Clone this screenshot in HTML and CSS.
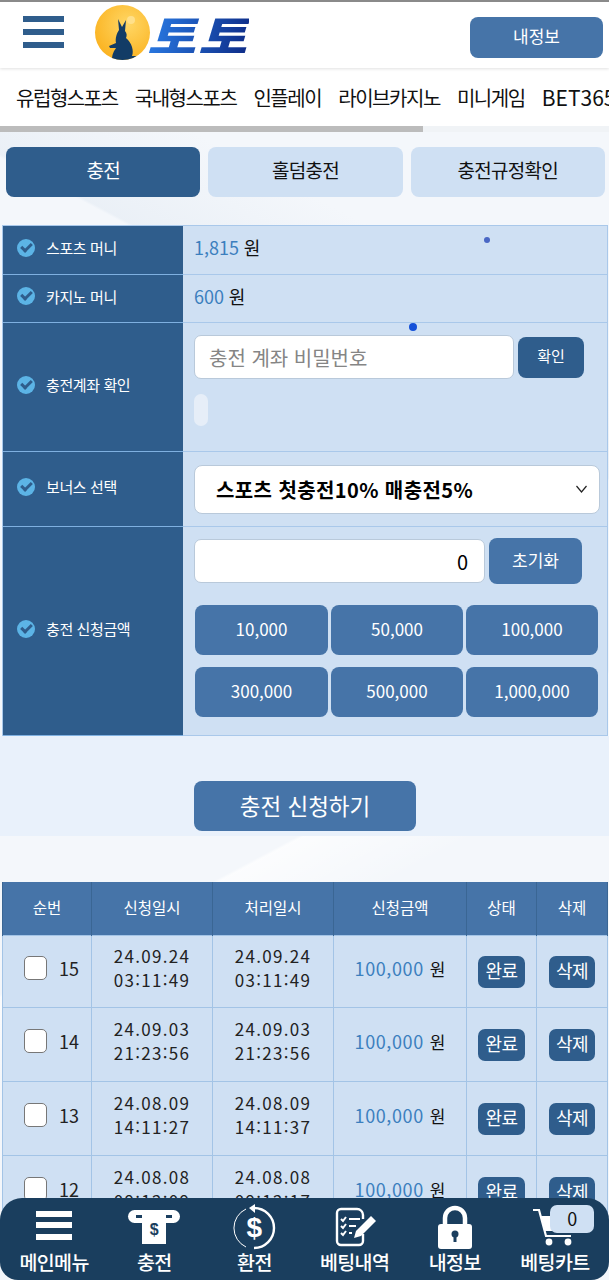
FILE: index.html
```html
<!DOCTYPE html>
<html lang="ko">
<head>
    <meta charset="UTF-8">
    <meta name="viewport" content="width=device-width, initial-scale=1.0">
    <title>충전</title>
    <link rel="stylesheet" href="styles.css">
</head>
<body>
    <div class="page">
        <header class="top-bar">
            <div class="burger"><span></span><span></span><span></span></div>
            <div class="logo">
                <div class="moon">
                    <svg viewBox="0 0 55 55" width="55" height="55">
                        <circle cx="36" cy="15" r="4" fill="#ffe08a"/>
                        <path d="M17 55 C17 49 19 46 21 43 L15 43 L14 41 L21 38 C20 33 22 28 24 25 L23 14 L27 22 L31 15 L30 26 C32 28 32 31 31 33 C37 38 39 46 37 51 L43 51 L38 55 Z" fill="#123c66"/>
                    </svg>
                </div>
                <span class="logo-text">토토</span>
            </div>
            <a class="my-btn" href="#">내정보</a>
        </header>

        <nav class="game-nav">
            <a href="#">유럽형스포츠</a>
            <a href="#">국내형스포츠</a>
            <a href="#">인플레이</a>
            <a href="#">라이브카지노</a>
            <a href="#">미니게임</a>
            <a class="bet365" href="#">BET365</a>
        </nav>
        <div class="nav-scroll"><div class="nav-thumb"></div></div>

        <div class="tabs">
            <a class="tab active" href="#">충전</a>
            <a class="tab" href="#">홀덤충전</a>
            <a class="tab" href="#">충전규정확인</a>
        </div>

        <section class="form-table">
            <span class="dot dot-small"></span>
            <span class="dot dot-big"></span>

            <div class="form-row row-sports">
                <div class="form-label"><i class="check"></i>스포츠 머니</div>
                <div class="form-value"><span><b class="num">1,815</b> <span class="won">원</span></span></div>
            </div>
            <div class="form-row row-money">
                <div class="form-label"><i class="check"></i>카지노 머니</div>
                <div class="form-value"><span><b class="num">600</b> <span class="won">원</span></span></div>
            </div>
            <div class="form-row row-account">
                <div class="form-label"><i class="check"></i>충전계좌 확인</div>
                <div class="form-value stack">
                    <div class="input-line">
                        <input class="text-input pass-input" type="text" placeholder="충전 계좌 비밀번호">
                        <button class="btn dark confirm-btn">확인</button>
                    </div>
                    <div class="pill"></div>
                </div>
            </div>
            <div class="form-row row-bonus">
                <div class="form-label"><i class="check"></i>보너스 선택</div>
                <div class="form-value">
                    <div class="select-box">
                        <span>스포츠 첫충전10% 매충전5%</span>
                        <svg viewBox="0 0 12 8" width="13" height="8"><path d="M1 1 L6 7 L11 1" fill="none" stroke="#222" stroke-width="1.2"/></svg>
                    </div>
                </div>
            </div>
            <div class="form-row row-amount">
                <div class="form-label"><i class="check"></i>충전 신청금액</div>
                <div class="form-value stack">
                    <div class="input-line">
                        <input class="text-input amount-input" type="text" value="0">
                        <button class="btn reset-btn">초기화</button>
                    </div>
                    <div class="amount-grid">
                        <button class="btn">10,000</button>
                        <button class="btn">50,000</button>
                        <button class="btn">100,000</button>
                        <button class="btn">300,000</button>
                        <button class="btn">500,000</button>
                        <button class="btn">1,000,000</button>
                    </div>
                </div>
            </div>
        </section>

        <div class="submit-zone">
            <button class="btn submit-btn">충전 신청하기</button>
        </div>

        <table class="history">
            <colgroup>
                <col class="c-no"><col class="c-date"><col class="c-date"><col class="c-amount"><col class="c-state"><col class="c-del">
            </colgroup>
            <thead>
                <tr><th>순번</th><th>신청일시</th><th>처리일시</th><th>신청금액</th><th>상태</th><th>삭제</th></tr>
            </thead>
            <tbody>
                <tr>
                    <td><div class="no-cell"><i class="box"></i>15</div></td>
                    <td>24.09.24<br>03:11:49</td>
                    <td>24.09.24<br>03:11:49</td>
                    <td><b class="num">100,000</b> <span class="won">원</span></td>
                    <td><span class="chip">완료</span></td>
                    <td><span class="chip">삭제</span></td>
                </tr>
                <tr>
                    <td><div class="no-cell"><i class="box"></i>14</div></td>
                    <td>24.09.03<br>21:23:56</td>
                    <td>24.09.03<br>21:23:56</td>
                    <td><b class="num">100,000</b> <span class="won">원</span></td>
                    <td><span class="chip">완료</span></td>
                    <td><span class="chip">삭제</span></td>
                </tr>
                <tr>
                    <td><div class="no-cell"><i class="box"></i>13</div></td>
                    <td>24.08.09<br>14:11:27</td>
                    <td>24.08.09<br>14:11:37</td>
                    <td><b class="num">100,000</b> <span class="won">원</span></td>
                    <td><span class="chip">완료</span></td>
                    <td><span class="chip">삭제</span></td>
                </tr>
                <tr>
                    <td><div class="no-cell"><i class="box"></i>12</div></td>
                    <td>24.08.08<br>09:12:09</td>
                    <td>24.08.08<br>09:12:17</td>
                    <td><b class="num">100,000</b> <span class="won">원</span></td>
                    <td><span class="chip">완료</span></td>
                    <td><span class="chip">삭제</span></td>
                </tr>
            </tbody>
        </table>

        <div class="bottom-nav">
            <a href="#">
                <svg viewBox="0 0 60 46" width="60" height="46">
                    <g fill="#fff"><rect x="12" y="7" width="36" height="6"/><rect x="12" y="18" width="36" height="6"/><rect x="12" y="30" width="36" height="6"/></g>
                </svg>
                <span>메인메뉴</span>
            </a>
            <a href="#">
                <svg viewBox="0 0 60 46" width="60" height="46">
                    <rect x="4" y="6" width="52" height="13" rx="6.5" fill="#fff"/>
                    <rect x="12" y="11" width="36" height="3" fill="#1a3e5e"/>
                    <rect x="18" y="11" width="24" height="29" fill="#fff"/>
                    <text x="30" y="31" class="icon-dollar small">$</text>
                </svg>
                <span>충전</span>
            </a>
            <a href="#">
                <svg viewBox="0 0 60 46" width="60" height="46">
                    <path d="M22 5 A21 21 0 0 0 22 43" fill="none" stroke="#fff" stroke-width="1"/>
                    <path d="M30 4 A20 20 0 0 1 30 44" fill="none" stroke="#fff" stroke-width="2.4"/>
                    <path d="M31 0 L25 4 L31 9 Z" fill="#fff"/>
                    <text x="30" y="33" class="icon-dollar">$</text>
                </svg>
                <span>환전</span>
            </a>
            <a href="#">
                <svg viewBox="0 0 60 46" width="60" height="46">
                    <path d="M38 30 V37 A4 4 0 0 1 34 41 H16 A4 4 0 0 1 12 37 V9 A4 4 0 0 1 16 5 H32 A6 6 0 0 1 38 11 V15" fill="none" stroke="#fff" stroke-width="2.4"/>
                    <g stroke="#fff" stroke-width="2" fill="none">
                        <path d="M16 15 L18 17 L21 13"/><path d="M24 15 H35"/>
                        <path d="M16 22 L18 24 L21 20"/><path d="M24 22 H31"/>
                        <path d="M16 29 L18 31 L21 27"/><path d="M24 29 H27"/>
                    </g>
                    <path d="M29 34 L31 27 L46 12 L51 17 L36 32 Z" fill="#fff"/>
                </svg>
                <span>베팅내역</span>
            </a>
            <a href="#">
                <svg viewBox="0 0 60 46" width="60" height="46">
                    <path d="M20 22 V14 A10 10 0 0 1 40 14 V22" fill="none" stroke="#fff" stroke-width="4.5"/>
                    <rect x="13" y="20" width="34" height="25" rx="3" fill="#fff"/>
                    <circle cx="30" cy="30" r="3.5" fill="#1a3e5e"/>
                    <rect x="28.5" y="31" width="3" height="7" fill="#1a3e5e"/>
                </svg>
                <span>내정보</span>
            </a>
            <a href="#" class="cart-item">
                <svg viewBox="0 0 60 46" width="60" height="46">
                    <path d="M8 6 H14 L21 32 H46" fill="none" stroke="#fff" stroke-width="2.2"/>
                    <path d="M16 12 H50 L46 27 H20 Z" fill="#fff"/>
                    <circle cx="24" cy="38" r="3.4" fill="#fff"/>
                    <circle cx="43" cy="38" r="3.4" fill="#fff"/>
                </svg>
                <span>베팅카트</span>
                <em class="cart-badge">0</em>
            </a>
        </div>
    </div>
</body>
</html>
```

FILE: styles.css
```css
html, body {
    height: 100%;
    margin: 0;
    padding: 0;
    overflow: hidden;
}
body {
    font-family: "Noto Sans CJK KR", "Noto Sans", sans-serif;
    color: #111;
}
a {
    color: inherit;
    text-decoration: none;
}
button, input {
    font-family: inherit;
}
.page {
    position: relative;
    height: 100%;
    overflow: hidden;
    background-color: #f4f7fb;
    background-image:
        linear-gradient(152deg, transparent 62%, rgba(255, 255, 255, 0.7) 62.2%, transparent 68%),
        linear-gradient(28deg, transparent 70%, rgba(225, 233, 242, 0.5) 70.2%, transparent 78%);
}

/* header */
.top-bar {
    display: flex;
    align-items: flex-start;
    height: 66px;
    background: #fff;
    border-top: 2px solid #8a8a8a;
    box-shadow: 0 1px 3px rgba(0, 0, 0, 0.12);
    position: relative;
}
.burger {
    width: 41px;
    margin: 14px 0 0 23px;
}
.burger span {
    display: block;
    height: 6px;
    margin-bottom: 7px;
    background: #2f5d8c;
}
.logo {
    display: flex;
    margin: 3px 0 0 31px;
}
.moon {
    width: 55px;
    height: 55px;
    border-radius: 50%;
    overflow: hidden;
    background: radial-gradient(circle at 60% 35%, #ffd765, #fbb423 75%);
}
.logo-text {
    margin: 7px 0 0 -3px;
    font-size: 44px;
    line-height: 44px;
    font-weight: 900;
    font-style: italic;
    letter-spacing: 2px;
    transform: scaleX(1.2);
    transform-origin: left center;
    background: linear-gradient(100deg, #2b7ee8, #0d2a85);
    -webkit-background-clip: text;
    background-clip: text;
    color: transparent;
}
.my-btn {
    margin: 15px 6px 0 auto;
    width: 133px;
    height: 41px;
    line-height: 38px;
    text-align: center;
    border-radius: 8px;
    background: #4674a8;
    color: #fff;
    font-size: 17px;
}

/* game menu */
.game-nav {
    display: flex;
    gap: 17px;
    height: 58px;
    padding-left: 16px;
    align-items: center;
    background: #fff;
    white-space: nowrap;
    overflow: hidden;
    font-size: 20px;
    letter-spacing: -1.45px;
}
.bet365 {
    font-size: 21px;
    letter-spacing: 0;
}
.nav-scroll {
    height: 6px;
    background: #f0f3f6;
}
.nav-thumb {
    width: 423px;
    height: 6px;
    background: #bcbcbc;
}

/* tabs */
.tabs {
    display: flex;
    gap: 8px;
    padding: 15px 4px 0 6px;
}
.tab {
    flex: 1;
    height: 50px;
    line-height: 46px;
    text-align: center;
    border-radius: 8px;
    background: #cfe0f3;
    font-size: 19px;
    letter-spacing: -0.7px;
}
.tab.active {
    background: #2f5d8c;
    color: #fff;
}

/* charge form */
.form-table {
    position: relative;
    margin: 28px 1px 0 2px;
    border: 1px solid #a9c8ea;
    border-width: 1px 1px 0;
}
.dot {
    position: absolute;
    border-radius: 50%;
    background: #1450d8;
}
.dot-small {
    left: 481px;
    top: 11px;
    width: 6px;
    height: 6px;
    background: #4a67c4;
}
.dot-big {
    left: 406px;
    top: 97px;
    width: 8px;
    height: 8px;
}
.form-row {
    display: grid;
    grid-template-columns: 180px 1fr;
}
.row-sports {
    height: 49px;
}
.row-money {
    height: 48px;
}
.row-account {
    height: 129px;
}
.row-bonus {
    height: 75px;
}
.row-amount {
    height: 209px;
}
.form-label {
    display: flex;
    align-items: center;
    padding: 0 0 5px 14px;
    background: #2f5d8c;
    border-bottom: 1px solid #7fb0e0;
    color: #fff;
    font-size: 15px;
    letter-spacing: -0.4px;
}
.check {
    position: relative;
    flex: none;
    width: 18px;
    height: 18px;
    margin-right: 11px;
    border-radius: 50%;
    background: #5cb4e6;
}
.check::after {
    content: "";
    position: absolute;
    left: 4px;
    top: 4px;
    width: 8px;
    height: 4px;
    border-left: 3px solid #2f5d8c;
    border-bottom: 3px solid #2f5d8c;
    transform: rotate(-45deg);
}
.form-value {
    display: flex;
    align-items: center;
    padding: 0 0 6px 11px;
    background: #cfe0f3;
    border-bottom: 1px solid #a9c8ea;
    font-size: 17px;
}
.form-value.stack {
    display: block;
    padding: 12px 0 0 11px;
}
.row-amount .form-value.stack {
    padding-top: 11px;
}
.num {
    font-weight: 400;
    color: #3c7fbe;
    font-size: 18px;
}
.input-line {
    display: flex;
    align-items: center;
    gap: 4px;
}
.text-input {
    box-sizing: border-box;
    height: 44px;
    border: 1px solid #b9c9da;
    border-radius: 7px;
    background: #fff;
    font-size: 20px;
    outline: none;
}
.pass-input {
    width: 320px;
    padding: 0 14px;
}
.text-input::placeholder {
    color: #858585;
    opacity: 1;
}
.amount-input {
    width: 291px;
    padding: 0 16px;
    text-align: right;
    color: #000;
}
.pill {
    width: 14px;
    height: 32px;
    margin-top: 15px;
    border-radius: 7px;
    background: #e6eef8;
}
.row-bonus .form-value {
    padding-bottom: 0;
}
.select-box {
    box-sizing: border-box;
    display: flex;
    align-items: center;
    justify-content: space-between;
    width: 406px;
    height: 49px;
    padding: 0 11px 0 21px;
    border: 1px solid #b9c9da;
    border-radius: 8px;
    background: #fff;
    font-size: 20px;
    font-weight: 700;
    letter-spacing: 0.4px;
    color: #000;
}
.btn {
    border: 0;
    border-radius: 8px;
    background: #4674a8;
    color: #fff;
    font-size: 17px;
    padding: 0 0 3px;
}
.btn.dark {
    background: #2f5d8c;
}
.confirm-btn {
    width: 66px;
    height: 41px;
    font-size: 15px;
}
.reset-btn {
    width: 93px;
    height: 46px;
}
.amount-grid {
    display: grid;
    grid-template-columns: 133px 132px 132px;
    grid-auto-rows: 50px;
    gap: 12px 3px;
    margin: 21px 0 0 1px;
}

/* submit */
.submit-zone {
    height: 50px;
    padding: 45px 0 5px 194px;
    background: #e9f1fb;
}
.submit-btn {
    width: 222px;
    height: 50px;
    font-size: 22.5px;
}

/* history */
.history {
    width: 606px;
    margin: 46px 0 0 2px;
    border-collapse: collapse;
    table-layout: fixed;
    text-align: center;
}
.c-no {
    width: 89px;
}
.c-date {
    width: 121px;
}
.c-amount {
    width: 133px;
}
.c-state {
    width: 70px;
}
.history th {
    height: 50px;
    padding: 0 0 3px;
    background: #4674a8;
    border: 1px solid #3a6694;
    border-width: 0 1px;
    color: #fff;
    font-size: 15.5px;
    font-weight: 400;
}
.history td {
    height: 66px;
    padding: 0 0 7px;
    background: #cfe0f3;
    border: 1px solid #a3c4e6;
    font-size: 17px;
    line-height: 24px;
    letter-spacing: 1.3px;
    color: #222;
}
.history td:nth-child(n+5) {
    padding-bottom: 0;
    height: 73px;
    letter-spacing: 0;
}
.history tbody tr:first-child td {
    height: 64px;
}
.history tbody tr:first-child td:nth-child(n+5) {
    height: 71px;
}
.no-cell {
    display: flex;
    align-items: center;
    padding-left: 21px;
    gap: 12px;
    letter-spacing: 0;
    font-size: 18px;
}
.box {
    box-sizing: border-box;
    width: 23px;
    height: 24px;
    border: 1px solid #777;
    border-radius: 5px;
    background: #fff;
}
.won {
    font-size: 18px;
    color: #111;
}
.history .num {
    letter-spacing: 0.6px;
}
.history .won {
    font-size: 17px;
    letter-spacing: 0;
}
.chip {
    display: inline-block;
    padding: 0 7px;
    height: 32px;
    line-height: 29px;
    border-radius: 7px;
    background: #2f5d8c;
    color: #fff;
    font-size: 18px;
    letter-spacing: -0.5px;
}

/* bottom menu */
.bottom-nav {
    position: absolute;
    left: 0;
    right: 0;
    bottom: 0;
    height: 82px;
    display: grid;
    grid-template-columns: repeat(6, 1fr);
    padding: 0 4px;
    border-radius: 22px 22px 18px 18px;
    background: #1a3e5e;
    color: #fff;
}
.bottom-nav a {
    position: relative;
    display: flex;
    flex-direction: column;
    align-items: center;
    padding-top: 6px;
    font-size: 19.5px;
    font-weight: 500;
    line-height: 24px;
    letter-spacing: -0.6px;
}
.icon-dollar {
    font-family: "Liberation Sans", sans-serif;
    font-size: 28px;
    font-weight: 700;
    fill: #fff;
    text-anchor: middle;
}
.icon-dollar.small {
    font-size: 16px;
    fill: #1a3e5e;
}
.cart-badge {
    position: absolute;
    left: 45px;
    top: 7px;
    width: 44px;
    height: 28px;
    line-height: 26px;
    text-align: center;
    font-style: normal;
    font-size: 18px;
    font-weight: 400;
    color: #111;
    border-radius: 7px;
    background: #cfe0f3;
}
```
